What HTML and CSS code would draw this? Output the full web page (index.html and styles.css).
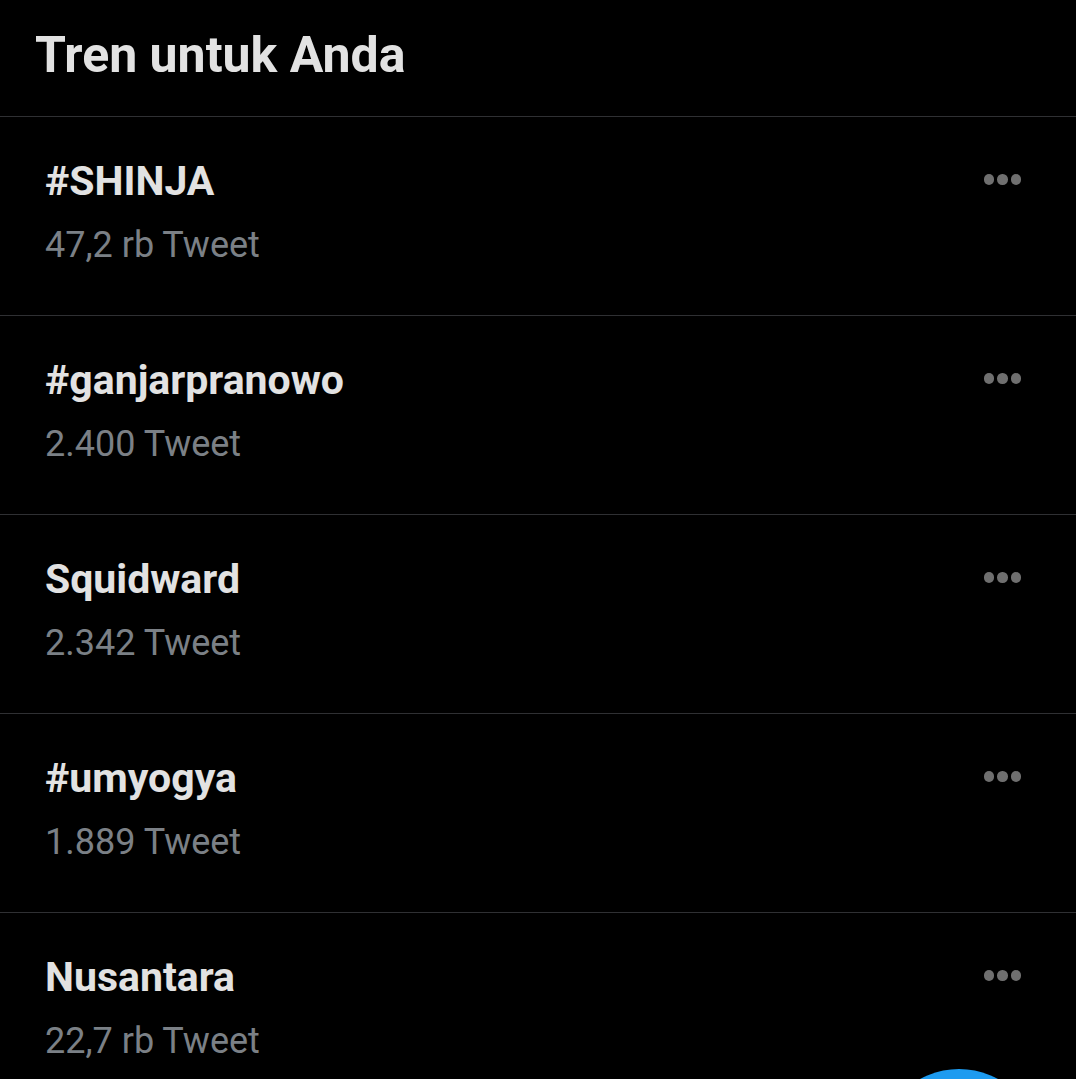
FILE: index.html
```html
<!DOCTYPE html>
<html lang="id">
<head>
    <meta charset="UTF-8">
    <meta name="viewport" content="width=device-width, initial-scale=1.0">
    <title>Tren untuk Anda</title>
    <link rel="stylesheet" href="styles.css">
</head>
<body>
<div class="page">
    <div class="header">
        <h1>Tren untuk Anda</h1>
    </div>

    <ul class="trend-list">
        <li class="trend">
            <div class="trend-text">
                <span class="trend-name">#SHINJA</span>
                <span class="trend-count">47,2 rb Tweet</span>
            </div>
            <button class="more" aria-label="Lainnya"><i></i><i></i><i></i></button>
        </li>
        <li class="trend">
            <div class="trend-text">
                <span class="trend-name">#ganjarpranowo</span>
                <span class="trend-count">2.400 Tweet</span>
            </div>
            <button class="more" aria-label="Lainnya"><i></i><i></i><i></i></button>
        </li>
        <li class="trend">
            <div class="trend-text">
                <span class="trend-name">Squidward</span>
                <span class="trend-count">2.342 Tweet</span>
            </div>
            <button class="more" aria-label="Lainnya"><i></i><i></i><i></i></button>
        </li>
        <li class="trend">
            <div class="trend-text">
                <span class="trend-name">#umyogya</span>
                <span class="trend-count">1.889 Tweet</span>
            </div>
            <button class="more" aria-label="Lainnya"><i></i><i></i><i></i></button>
        </li>
        <li class="trend">
            <div class="trend-text">
                <span class="trend-name">Nusantara</span>
                <span class="trend-count">22,7 rb Tweet</span>
            </div>
            <button class="more" aria-label="Lainnya"><i></i><i></i><i></i></button>
        </li>
    </ul>

    <!-- floating compose button, only its top edge is visible -->
    <div class="fab"></div>
</div>
</body>
</html>
```

FILE: styles.css
```css
body {
    margin: 0;
    background: #000;
    font-family: Roboto, "Liberation Sans", sans-serif;
    overflow: hidden;
}

.page {
    position: relative;
    height: 1079px;
    overflow: hidden;
}

.header {
    height: 91px;
    padding: 25px 0 0 35px;
    border-bottom: 1px solid #2f3033;
}

.header h1 {
    margin: 0;
    font-size: 50px;
    line-height: 60px;
    font-weight: 700;
    color: #e2e2e2;
}

.trend-list {
    list-style: none;
    margin: 0;
    padding: 0;
}

.trend {
    display: flex;
    justify-content: space-between;
    align-items: flex-start;
    height: 158px;
    padding: 40px 55px 0 45px;
    border-bottom: 1px solid #2f3033;
}

.trend-text {
    display: flex;
    flex-direction: column;
    gap: 16px;
}

.trend-name {
    font-size: 41px;
    line-height: 48px;
    font-weight: 700;
    color: #e2e2e2;
}

.trend-count {
    font-size: 36px;
    line-height: 48px;
    font-weight: 400;
    color: #7b8086;
}

.more {
    display: flex;
    gap: 3px;
    margin-top: 17px;
    padding: 0;
    background: none;
    border: none;
}

.more i {
    width: 10.5px;
    height: 10.5px;
    border-radius: 50%;
    background: #6f6f6f;
}

.fab {
    position: absolute;
    left: 878px;
    top: 1069px;
    width: 162px;
    height: 162px;
    border-radius: 50%;
    background: #1d9bf0;
}
```
